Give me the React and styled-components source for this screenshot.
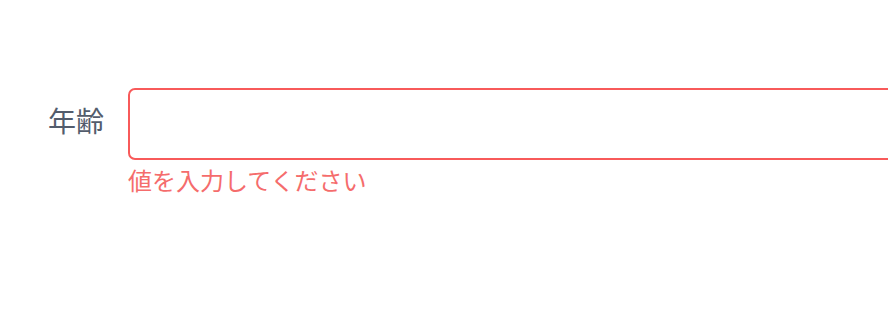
import React from "react";
import styled, { createGlobalStyle } from "styled-components";

const Global = createGlobalStyle`
  html, body { margin: 0; padding: 0; background: #fff; }
  body { font-family: "Noto Sans CJK JP", "Noto Sans", sans-serif; }
`;

const Page = styled.div`
  width: 888px;
  height: 326px;
  overflow: hidden;
  padding-top: 88px;
  box-sizing: border-box;
`;

const FormItem = styled.div`
  display: flex;
  align-items: flex-start;
`;

const Label = styled.label`
  width: 128px;
  flex: none;
  box-sizing: border-box;
  padding-right: 24px;
  text-align: right;
  font-size: 28px;
  line-height: 64px;
  color: #535c6c;
`;

const Content = styled.div`
  flex: none;
  width: 800px;
  display: flex;
  flex-direction: column;
`;

const Input = styled.input`
  box-sizing: border-box;
  width: 800px;
  height: 72px;
  border: 2px solid ${(p) => (p.$error ? "#f85a5a" : "#dcdfe6")};
  border-radius: 7px;
  outline: none;
  padding: 0 24px;
  font-size: 26px;
  font-family: inherit;
  background: #fff;
`;

const ErrorText = styled.div`
  font-size: 24px;
  line-height: 32px;
  margin-top: 4px;
  color: #f56c6c;
`;

export default function App() {
  return (
    <Page>
      <Global />
      <FormItem>
        <Label>年齢</Label>
        <Content>
          <Input $error />
          <ErrorText>値を入力してください</ErrorText>
        </Content>
      </FormItem>
    </Page>
  );
}
